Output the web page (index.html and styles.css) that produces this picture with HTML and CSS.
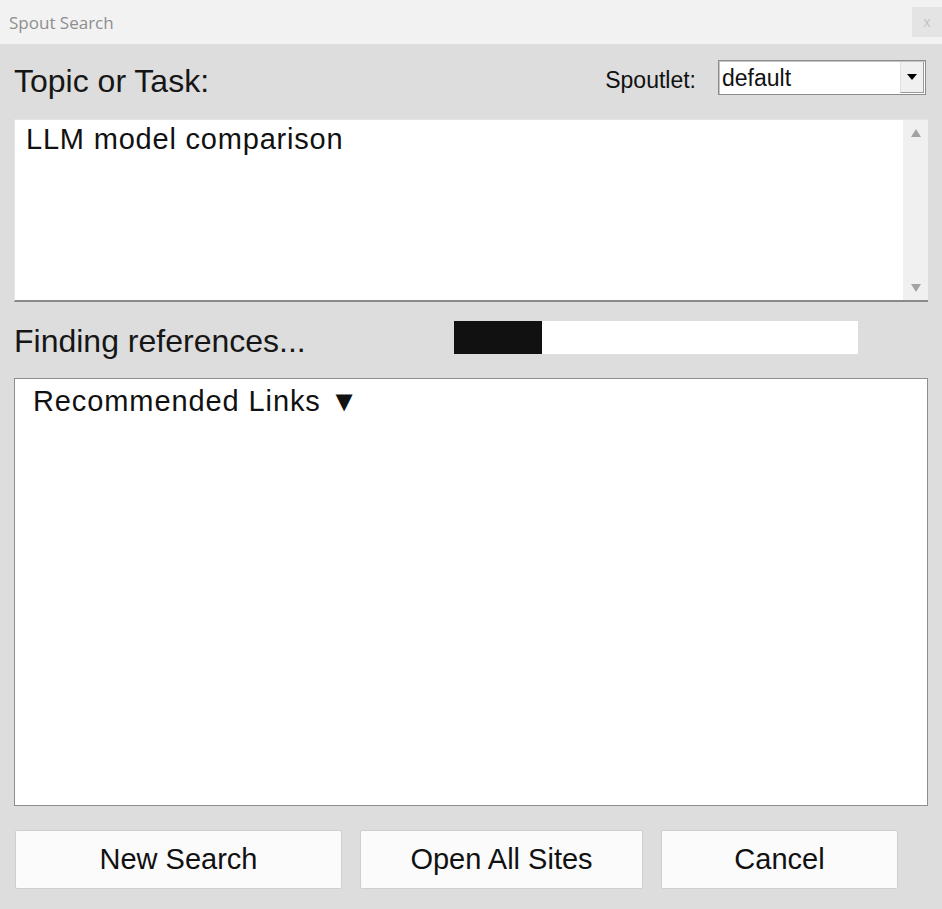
FILE: index.html
```html
<!DOCTYPE html>
<html lang="en">
<head>
  <meta charset="UTF-8">
  <title>Spout Search</title>
  <link rel="stylesheet" href="styles.css">
</head>
<body>
  <div class="titlebar">
    <span class="title">Spout Search</span>
    <span class="close">x</span>
  </div>

  <div class="dialog">
    <div class="topic-row">
      <label class="big-label">Topic or Task:</label>
      <div class="spoutlet">
        <span class="spoutlet-label">Spoutlet:</span>
        <div class="combo">
          <span class="combo-value">default</span>
          <span class="combo-btn">
            <svg width="10" height="6" viewBox="0 0 10 6"><path d="M0 0H10L5 6Z" fill="#000"/></svg>
          </span>
        </div>
      </div>
    </div>

    <div class="topic-box">
      <div class="topic-text">LLM model comparison</div>
      <div class="vscroll">
        <svg width="10" height="8" viewBox="0 0 10 8"><path d="M5 0L10 8H0Z" fill="#a3a3a3"/></svg>
        <svg width="10" height="8" viewBox="0 0 10 8"><path d="M0 0H10L5 8Z" fill="#a3a3a3"/></svg>
      </div>
    </div>

    <div class="status-row">
      <span class="big-label">Finding references...</span>
      <div class="progress"><div class="progress-fill" style="width: 88px"></div></div>
    </div>

    <div class="links-box">
      <div class="links-head">Recommended Links ▼</div>
    </div>

    <div class="button-row">
      <button class="btn btn-new">New Search</button>
      <button class="btn btn-open">Open All Sites</button>
      <button class="btn btn-cancel">Cancel</button>
    </div>
  </div>
</body>
</html>
```

FILE: styles.css
```css
* { box-sizing: border-box; }
body {
  margin: 0;
  background: #dddddd;
  font-family: "Liberation Sans", Arial, sans-serif;
  color: #111;
}
.titlebar {
  height: 44px;
  background: #f2f2f2;
  display: flex;
  align-items: center;
  justify-content: space-between;
}
.title {
  padding-left: 9px;
  font-family: "Open Sans", "Liberation Sans", sans-serif;
  font-size: 17px;
  color: #8e8e8e;
}
.close {
  width: 30px;
  height: 30px;
  background: #e4e4e4;
  color: #c4c4c4;
  font-size: 14px;
  display: flex;
  align-items: center;
  justify-content: center;
}
.dialog {
  padding: 16px 14px 20px 14px;
}
.big-label {
  font-size: 32px;
  line-height: 33px;
  color: #161616;
}
.topic-row {
  height: 35px;
  display: flex;
  align-items: center;
  justify-content: space-between;
  padding-right: 2px;
}
.topic-row .big-label {
  padding-top: 8px;
}
.spoutlet {
  display: flex;
  align-items: center;
  gap: 22px;
}
.spoutlet-label {
  font-size: 23px;
  padding-top: 5px;
}
.combo {
  width: 208px;
  height: 35px;
  background: #fff;
  border: 1px solid #8c8c8c;
  box-shadow: inset 1px 1px 0 #c4c4c4;
  display: flex;
  align-items: center;
  justify-content: space-between;
  padding: 1px 1px 1px 3px;
}
.combo-value {
  font-size: 23px;
  padding-top: 2px;
}
.combo-btn {
  width: 24px;
  height: 31px;
  background: #f0f0f0;
  border-left: 1px solid #e0e0e0;
  border-right: 1px solid #9a9a9a;
  border-bottom: 1px solid #9a9a9a;
  display: flex;
  align-items: center;
  justify-content: center;
}
.topic-box {
  margin-top: 24px;
  height: 183px;
  background: #fff;
  border-top: 1px solid #e4e4e4;
  border-left: 1px solid #e4e4e4;
  border-bottom: 2px solid #8a8a8a;
  display: flex;
}
.topic-text {
  flex: 1;
  padding: 3px 11px;
  font-size: 29px;
  letter-spacing: 0.8px;
}
.vscroll {
  width: 25px;
  background: #f0f0f0;
  display: flex;
  flex-direction: column;
  align-items: center;
  justify-content: space-between;
  padding: 9px 0 8px;
}
.status-row {
  margin-top: 19px;
  height: 33px;
  display: grid;
  grid-template-columns: 440px 404px;
  align-items: start;
}
.status-row .big-label {
  padding-top: 4px;
}
.progress {
  height: 33px;
  background: #fff;
}
.progress-fill {
  height: 100%;
  background: #111;
}
.links-box {
  margin-top: 24px;
  height: 428px;
  background: #fff;
  border: 1px solid #8e8e8e;
  padding: 6px 18px 0;
}
.links-head {
  font-size: 29px;
  letter-spacing: 0.9px;
}
.button-row {
  margin-top: 24px;
  display: flex;
  gap: 18px;
  padding-left: 1px;
}
.btn {
  height: 59px;
  background: #fbfbfb;
  border: 1px solid #cfcfcf;
  border-radius: 2px;
  font-family: "Liberation Sans", Arial, sans-serif;
  font-size: 29px;
  color: #111;
  padding: 0;
}
.btn-new { width: 327px; }
.btn-open { width: 283px; }
.btn-cancel { width: 237px; }
```
